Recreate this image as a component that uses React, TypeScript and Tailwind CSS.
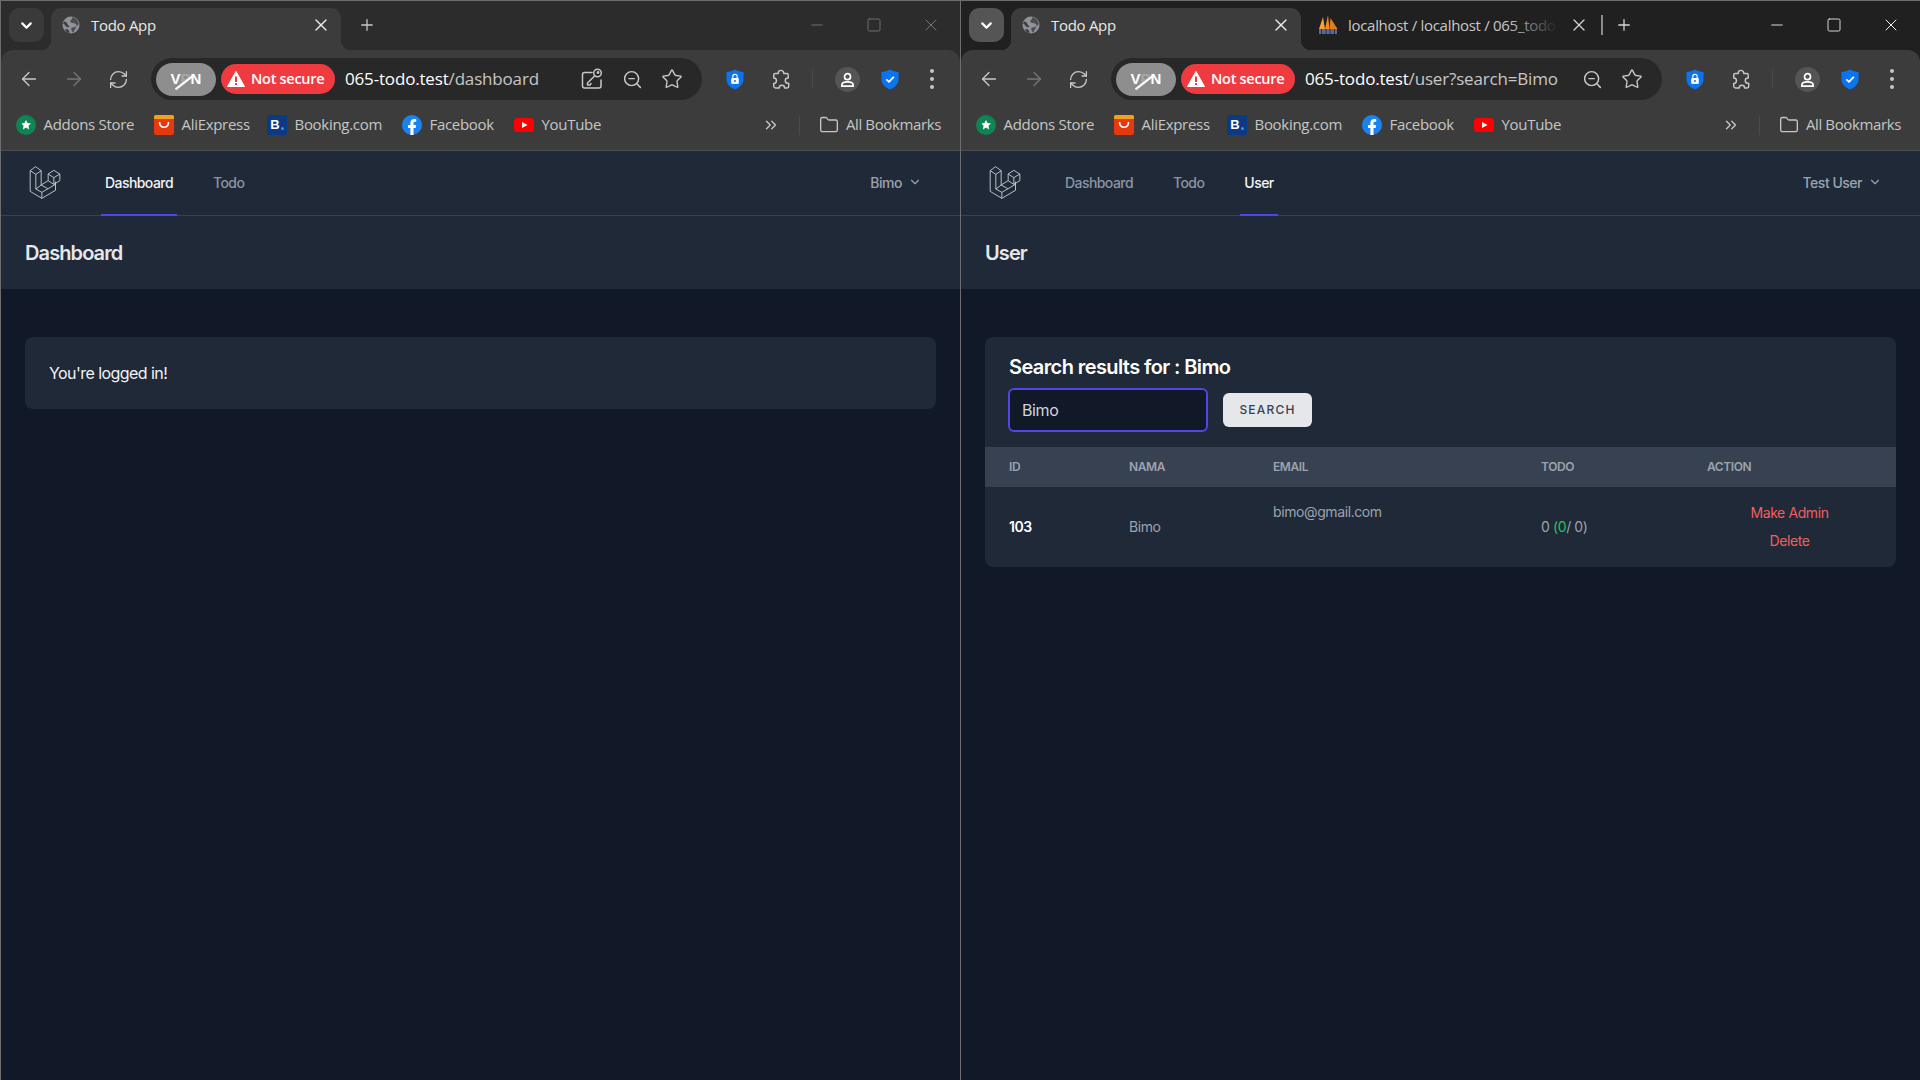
import type { ReactNode } from 'react'
import {
  ArrowLeft,
  ArrowRight,
  ChevronDown,
  ChevronsRight,
  Folder,
  Minus,
  Plus,
  RefreshCw,
  Square,
  Star,
  X,
  ZoomOut,
} from 'lucide-react'

const chromeFont = "font-['Open_Sans','Noto_Sans',sans-serif]"
const pageFont = "font-['Inter','Noto_Sans',sans-serif] tracking-[-0.025em]"

function LaravelLogo() {
  return (
    <svg viewBox="26 19 95 99" className="h-[33px] w-[32px] text-[#d1d5db]" fill="none" stroke="currentColor" strokeWidth="2.6" strokeLinejoin="round">
      <path d="M29 33 L45 21 L62 33 L46 44 Z" />
      <path d="M29 33 V95 L64 116 L105 92 V66" />
      <path d="M46 44 V88 L64 98 V116" />
      <path d="M62 33 V76 L82 87" />
      <path d="M64 98 L105 74" />
      <path d="M46 88 L62 76" />
      <path d="M83 43 L100 32 L118 43 L100 54 Z" />
      <path d="M83 43 V63 L100 74 L118 63 V43" />
      <path d="M100 54 V74" />
      <path d="M83 63 L62 76" />
    </svg>
  )
}

function GlobeIcon() {
  return (
    <svg viewBox="0 0 18 18" className="h-[18px] w-[18px]">
      <circle cx="9" cy="9" r="8.5" fill="#8d939b" />
      <path d="M3 13.5c1.5-.6 3-.2 4 1l.5 2.5C5.5 17 3.8 15.5 3 13.5zM2 5.5c1.5.2 3 1.2 3.5 2.8.3 1.2 1.3 1.5 2 2.2-.8 1.2-2.7.8-3.6-.3C3 9 2 7.8 1 7.5z" fill="#3c3c3c" />
      <path d="M10 1c1 1-.5 2.5-1.5 3.5S9.5 7 11 7s3.5 1 3.5 2.5-1.2 3-2 4.500-1 2-2 2.500c-1-1-.8-3-1.500-4.500C13 11 16 10 16.800 8 16 4 13.500 1.500 10 1z" fill="#3c3c3c" opacity="0.8" />
    </svg>
  )
}

function PmaIcon() {
  return (
    <svg viewBox="0 0 20 20" className="h-[20px] w-[20px]">
      <path d="M1 14 L5 2 L7 14 Z" fill="#f7a13a" />
      <path d="M7 14 L10 0 L11.500 14 Z" fill="#f48a1c" />
      <path d="M11.500 14 L12.500 3 L19.500 14 Z" fill="#e0801a" />
      <rect x="1" y="14" width="18" height="5" fill="#5b6a9c" />
      <path d="M3.500 14v5M8 14v5M12 14v5M16.500 14v5" stroke="#20243a" strokeWidth="0.8" />
    </svg>
  )
}

function ShieldIcon({ check }: { check?: boolean }) {
  return (
    <svg viewBox="0 0 18 21" className="h-[21px] w-[18px]">
      <path d="M9 0.500 C11.500 2 14.500 3 17.500 3 V10.500 C17.500 15 13.500 18.500 9 20.500 C4.500 18.500 0.500 15 0.500 10.500 V3 C3.500 3 6.500 2 9 0.500 Z" fill="#0b74f1" />
      {check ? (
        <path d="M5.300 10.300 L8 12.800 L12.800 7.800" fill="none" stroke="#fff" strokeWidth="1.800" />
      ) : (
        <>
          <path d="M6.800 9 V7.500 a2.200 2.200 0 0 1 4.400 0 V9" fill="none" stroke="#fff" strokeWidth="1.200" />
          <rect x="5.200" y="9" width="7.600" height="6" rx="1" fill="#fff" />
          <circle cx="9" cy="12" r="1" fill="#0b74f1" />
        </>
      )}
    </svg>
  )
}

function PuzzleIcon() {
  return (
    <svg viewBox="0 0 22 22" className="h-[22px] w-[22px]" fill="none" stroke="#c7c7c7" strokeWidth="1.600" strokeLinejoin="round">
      <path d="M8 4.500 a3 3 0 0 1 6 0 L14 5 h3.500 a1.500 1.500 0 0 1 1.500 1.500 V10 h-.500 a2.800 2.800 0 0 0 0 5.600 H19.500 V19 a1.800 1.800 0 0 1-1.800 1.800 H15 a3 3 0 0 0-6 0 H5 A2 2 0 0 1 3 19 V16 a3 3 0 0 0 0-6 V6.800 A1.800 1.800 0 0 1 4.800 5 H8 Z" />
    </svg>
  )
}

function KeyShareIcon() {
  return (
    <svg viewBox="0 0 22 22" className="h-[22px] w-[22px]" fill="none" stroke="#c7c7c7" strokeWidth="1.500" strokeLinecap="round" strokeLinejoin="round">
      <path d="M11 4.500 H3.500 a2 2 0 0 0-2 2 V18 a2 2 0 0 0 2 2 H18 a2 2 0 0 0 2-2 V12" />
      <circle cx="16.500" cy="5" r="3.800" />
      <path d="M13.800 7.700 L6.500 15 V17 H9 L10 15.500" />
      <circle cx="17" cy="4.500" r="0.700" fill="#c7c7c7" />
    </svg>
  )
}

function WarningIcon() {
  return (
    <svg viewBox="0 0 18 18" className="h-[18px] w-[18px]">
      <path d="M9 1.500 L17.500 16.500 H0.500 Z" fill="#fff" stroke="#fff" strokeLinejoin="round" />
      <rect x="8" y="6.500" width="2" height="5.500" fill="#ef3b3f" />
      <rect x="8" y="13" width="2" height="2" fill="#ef3b3f" />
    </svg>
  )
}

function Bookmark({ w, icon, label }: { w: string; icon: ReactNode; label: string }) {
  return (
    <div className={`flex items-center gap-[7.500px] ${w}`}>
      <span className="flex h-[20px] w-[20px] shrink-0 items-center justify-center">{icon}</span>
      <span className="whitespace-nowrap text-[15px] tracking-[-0.02em] text-[#c4c7c5]">{label}</span>
    </div>
  )
}

function BookmarksBar() {
  return (
    <div className="flex h-[42px] items-center pl-[15px] pb-[9px]">
      <Bookmark
        w="w-[138px]"
        label="Addons Store"
        icon={
          <svg viewBox="0 0 20 20" className="h-[20px] w-[20px]">
            <circle cx="10" cy="10" r="10" fill="#0f8553" />
            <path d="M10 5 L11.500 8 L15 8.400 L12.500 10.800 L13 14.500 L10 12.600 L7 14.500 L7.500 10.800 L5.500 8.400 L8.500 8 Z" fill="#fff" />
          </svg>
        }
      />
      <Bookmark
        w="w-[113px]"
        label="AliExpress"
        icon={
          <svg viewBox="0 0 20 20" className="h-[20px] w-[20px]">
            <rect width="20" height="20" rx="2" fill="#e8380d" />
            <path d="M0 2 a2 2 0 0 1 2-2 h16 a2 2 0 0 1 2 2 v2 H0 Z" fill="#f7a11b" />
            <path d="M5.500 7 c.3 7 8.700 7 9 0" fill="none" stroke="#fff" strokeWidth="1.600" />
          </svg>
        }
      />
      <Bookmark
        w="w-[135px]"
        label="Booking.com"
        icon={
          <span className="relative flex h-[20px] w-[20px] items-center justify-center rounded-[2px] bg-[#0b3a82] font-['Liberation_Sans',sans-serif] text-[13px] font-bold text-white">
            <span className="-ml-[4px]">B</span>
            <span className="absolute bottom-[5px] right-[3px] h-[3px] w-[3px] rounded-full bg-[#2f9be8]" />
          </span>
        }
      />
      <Bookmark
        w="w-[112px]"
        label="Facebook"
        icon={
          <svg viewBox="0 0 20 20" className="h-[20px] w-[20px]">
            <circle cx="10" cy="10" r="10" fill="#1a83f0" />
            <path d="M8.400 20 V13 H6 V10 H8.400 V7.800 C8.400 5.300 9.900 4 12.100 4 L14.200 4.200 V6.800 H13 C11.800 6.800 11.500 7.400 11.500 8.200 V10 H14.100 L13.700 13 H11.500 V20 Z" fill="#fff" />
          </svg>
        }
      />
      <Bookmark
        w="w-[100px]"
        label="YouTube"
        icon={
          <svg viewBox="0 0 20 14" className="h-[14px] w-[20px]">
            <rect width="20" height="14" rx="3.500" fill="#f00" />
            <path d="M8 4 L13.500 7 L8 10 Z" fill="#fff" />
          </svg>
        }
      />
      <div className="ml-auto flex items-center pr-[19px]">
        <ChevronsRight className="h-[18px] w-[18px] text-[#c7c7c7]" strokeWidth={1.800} />
        <span className="ml-[19px] h-[20px] w-px bg-[#4a4a4a]" />
        <Folder className="ml-[19px] h-[20px] w-[20px] text-[#c7c7c7]" strokeWidth={1.600} />
        <span className="ml-[7px] whitespace-nowrap text-[15px] tracking-[-0.025em] text-[#c4c7c5]">All Bookmarks</span>
      </div>
    </div>
  )
}

function BrowserWindow({
  focused,
  url,
  urlPath,
  showKey,
  user,
  links,
  activeLink,
  extraTab,
  children,
}: {
  focused?: boolean
  url: string
  urlPath: string
  showKey?: boolean
  user: string
  links: string[]
  activeLink: string
  extraTab?: boolean
  children: ReactNode
}) {
  const stripBg = focused ? 'bg-[#202020]' : 'bg-[#2c2c2c]'
  const ctrlColor = focused ? 'text-[#f1f1f1]' : 'text-[#777777]'

  return (
    <div className="flex h-[1080px] w-[960px] flex-col border-l border-t border-[#6e6e6e] bg-[#111827]">
      {/* Tab strip */}
      <div className={`flex h-[49px] items-start ${chromeFont} ${stripBg}`}>
        <div className={`ml-[8px] mt-[7px] flex h-[34px] w-[35px] items-center justify-center rounded-[10px] ${focused ? 'bg-[#555555]' : 'bg-[#3a3a3a]'}`}>
          <ChevronDown className="h-[17px] w-[17px] text-white" strokeWidth={3} />
        </div>
        <div className="relative z-10 ml-[7px] mt-[7px] flex h-[42px] w-[290px] items-center rounded-t-[10px] bg-[#3c3c3c] pl-[11px] pb-[8px]">
          <span className="absolute bottom-0 left-[-10px] h-[10px] w-[10px] bg-[radial-gradient(circle_at_0_0,transparent_10px,#3c3c3c_10.500px)]" />
          <span className="absolute bottom-0 right-[-10px] h-[10px] w-[10px] bg-[radial-gradient(circle_at_100%_0,transparent_10px,#3c3c3c_10.500px)]" />
          <GlobeIcon />
          <span className="ml-[11px] text-[15px] tracking-[-0.02em] text-[#e8e8e8]">Todo App</span>
          <X className="absolute right-[10px] top-[7px] h-[20px] w-[20px] text-[#e8e8e8]" strokeWidth={1.700} />
        </div>
        {extraTab && (
          <div className="relative ml-[17px] mt-[7px] flex h-[42px] w-[270px] items-center pb-[8px]">
            <PmaIcon />
            <span className="ml-[10px] w-[209px] overflow-hidden whitespace-nowrap text-[15px] tracking-[-0.02em] text-[#c7c7c7]">localhost / localhost / 065_todo</span>
            <span className="absolute left-[190px] top-0 h-[42px] w-[50px] bg-[linear-gradient(to_right,transparent,#202020)]" />
            <X className="absolute right-[-1px] top-[7px] h-[20px] w-[20px] text-[#d5d5d5]" strokeWidth={1.500} />
          </div>
        )}
        {extraTab && <span className="ml-[13px] mt-[14px] h-[20px] w-[2px] bg-[#8a8a8a]" />}
        <Plus className={`mt-[15px] h-[18px] w-[18px] ${extraTab ? 'ml-[12px] text-[#d5d5d5]' : 'ml-[17px] text-[#c7c7c7]'}`} strokeWidth={1.700} />
        <div className={`ml-auto flex h-[49px] pb-[2px] ${ctrlColor}`}>
          <span className="flex w-[57px] items-center justify-center">
            <Minus className="h-[18px] w-[18px]" strokeWidth={1.200} />
          </span>
          <span className="flex w-[57px] items-center justify-center">
            <Square className="h-[16px] w-[16px]" strokeWidth={1.300} />
          </span>
          <span className="flex w-[58px] items-center justify-center">
            <X className="h-[20px] w-[20px]" strokeWidth={1.200} />
          </span>
        </div>
      </div>

      {/* Toolbar + bookmarks */}
      <div className={stripBg}>
        <div className={`rounded-t-[12px] border-b border-[#4d4d4d] bg-[#3c3c3c] ${chromeFont}`}>
          <div className="flex h-[58px] items-center pl-[5px]">
            <span className="flex w-[45px] justify-center">
              <ArrowLeft className="h-[22px] w-[22px] text-[#c7c7c7]" strokeWidth={1.500} />
            </span>
            <span className="flex w-[45px] justify-center">
              <ArrowRight className="h-[22px] w-[22px] text-[#767676]" strokeWidth={1.500} />
            </span>
            <span className="flex w-[45px] justify-center">
              <RefreshCw className="h-[21px] w-[21px] text-[#c7c7c7]" strokeWidth={1.500} />
            </span>
            <div className="ml-[10px] flex h-[42px] w-[551px] items-center rounded-full bg-[#282828] pl-[5px] pr-[10px]">
              <div className="relative flex h-[33px] w-[60px] items-center justify-center rounded-full bg-[#8e8e8e] font-['Liberation_Sans',sans-serif] text-[15px] font-bold text-white">
                V<span className="text-[#a6a6a6]">P</span>N
                <span className="absolute left-[17px] top-[18px] h-[2px] w-[24px] -rotate-[38deg] bg-white" />
              </div>
              <div className="ml-[5px] flex h-[30px] w-[114px] items-center rounded-full bg-[#ef3b3f] pl-[6px] text-white">
                <WarningIcon />
                <span className="ml-[6px] whitespace-nowrap text-[14.500px] font-semibold tracking-[-0.02em]">Not secure</span>
              </div>
              <span className="ml-[10px] whitespace-nowrap text-[17px] tracking-[-0.01em] text-white">
                {url}
                <span className="text-[#c7c7c7]">{urlPath}</span>
              </span>
              <div className="ml-auto flex items-center">
                {showKey && (
                  <span className="flex w-[40px] justify-center">
                    <KeyShareIcon />
                  </span>
                )}
                <span className="flex w-[40px] justify-center">
                  <ZoomOut className="h-[21px] w-[21px] text-[#c7c7c7]" strokeWidth={1.700} />
                </span>
                <span className="flex w-[40px] justify-center">
                  <Star className="h-[22px] w-[22px] text-[#c7c7c7]" strokeWidth={1.500} />
                </span>
              </div>
            </div>
            <span className="ml-[23px] flex w-[20px] justify-center">
              <ShieldIcon />
            </span>
            <span className="ml-[26px] flex w-[20px] justify-center">
              <PuzzleIcon />
            </span>
            <span className="ml-[21px] h-[20px] w-px bg-[#4a4a4a]" />
            <span className="ml-[22px] flex h-[25px] w-[25px] items-center justify-center rounded-full bg-[#555555]">
              <svg viewBox="0 0 16 16" className="h-[15px] w-[15px]" fill="none" stroke="#fff" strokeWidth="1.800">
                <circle cx="8" cy="5" r="3.200" />
                <path d="M2 15 v-1 c0-2 2-3.500 6-3.500 s6 1.500 6 3.500 v1 Z" />
              </svg>
            </span>
            <span className="ml-[21px] flex w-[18px] justify-center">
              <ShieldIcon check />
            </span>
            <span className="ml-[31px] flex flex-col gap-[4px]">
              <span className="h-[4px] w-[4px] rounded-full bg-[#c7c7c7]" />
              <span className="h-[4px] w-[4px] rounded-full bg-[#c7c7c7]" />
              <span className="h-[4px] w-[4px] rounded-full bg-[#c7c7c7]" />
            </span>
          </div>
          <BookmarksBar />
        </div>
      </div>

      {/* App page */}
      <div className={`flex flex-1 flex-col ${pageFont}`}>
        <nav className="flex h-[65px] items-stretch border-b border-[#374151] bg-[#1f2937] pl-[28px] pr-[38px]">
          <div className="flex items-center pb-[2px]">
            <LaravelLogo />
          </div>
          <div className="ml-[40px] flex gap-[32px]">
            {links.map((link) => (
              <a
                key={link}
                className={
                  link === activeLink
                    ? 'flex h-[65px] items-center border-b-2 border-[#4f46e5] px-[4px] text-[14px] font-medium tracking-[-0.04em] text-[#f3f4f6]'
                    : 'flex h-[65px] items-center border-b-2 border-transparent px-[4px] text-[14px] font-medium tracking-[-0.04em] text-[#8b95a5]'
                }
              >
                {link}
              </a>
            ))}
          </div>
          <div className="ml-auto flex items-center gap-[6px] pb-[2px] text-[14px] font-medium tracking-[-0.035em] text-[#9ca3af]">
            {user}
            <ChevronDown className="h-[14px] w-[14px]" strokeWidth={2} />
          </div>
        </nav>
        <header className="flex h-[73px] items-center bg-[#1f2937] px-[24px]">
          <h2 className="text-[20px] font-semibold tracking-[-0.045em] text-[#e5e7eb]">{activeLink}</h2>
        </header>
        <main className="px-[24px] py-[48px]">{children}</main>
      </div>
    </div>
  )
}

export default function App() {
  return (
    <div className="flex h-[1080px] w-[1920px] overflow-hidden">
      <BrowserWindow
        url="065-todo.test"
        urlPath="/dashboard"
        showKey
        user="Bimo"
        links={['Dashboard', 'Todo']}
        activeLink="Dashboard"
      >
        <div className="rounded-lg bg-[#1f2937] p-[24px] text-[16px] leading-[24px] tracking-[-0.035em] text-[#f3f4f6]">You're logged in!</div>
      </BrowserWindow>

      <BrowserWindow
        focused
        extraTab
        url="065-todo.test"
        urlPath="/user?search=Bimo"
        user="Test User"
        links={['Dashboard', 'Todo', 'User']}
        activeLink="User"
      >
        <div className="overflow-hidden rounded-lg bg-[#1f2937] text-[#f3f4f6]">
          <div className="px-[24px] pt-[16px]">
            <h3 className="text-[20px] font-semibold leading-[28px] tracking-[-0.03em] text-white">Search results for : Bimo</h3>
            <div className="mb-[15px] mt-[7px] flex items-center gap-[15px]">
              <input
                readOnly
                value="Bimo"
                className="-ml-px h-[44px] w-[200px] rounded-md border-2 border-[#4f46e5] bg-[#111827] px-[12px] text-[16px] text-[#d1d5db] outline-none"
              />
              <button className="h-[34px] w-[89px] rounded-md bg-[#e5e7eb] text-[12px] font-medium uppercase tracking-[0.1em] text-[#374151]">
                Search
              </button>
            </div>
          </div>
          <table className="w-full table-fixed text-left text-[14px] leading-[20px]">
            <colgroup>
              <col className="w-[120px]" />
              <col className="w-[144px]" />
              <col className="w-[268px]" />
              <col className="w-[166px]" />
              <col />
            </colgroup>
            <thead>
              <tr className="h-[40px] bg-[#374151] text-[12px] font-semibold uppercase text-[#9ca3af]">
                <th className="px-[24px] font-semibold">ID</th>
                <th className="px-[24px] font-semibold">Nama</th>
                <th className="px-[24px] font-semibold">Email</th>
                <th className="px-[24px] font-semibold">Todo</th>
                <th className="px-[24px] font-semibold">Action</th>
              </tr>
            </thead>
            <tbody>
              <tr className="h-[80px]">
                <td className="px-[24px] font-semibold text-white">103</td>
                <td className="px-[24px] text-[#9ca3af]">Bimo</td>
                <td className="px-[24px] pt-[15px] align-top text-[#9ca3af]">bimo@gmail.com</td>
                <td className="px-[24px] text-[#9ca3af]">
                  0 <span className="text-[#22c55e]">(0</span>/ 0)
                </td>
                <td className="px-[24px] py-[12px] text-center text-[#f25f5f]">
                  <a className="block py-[4px]">Make Admin</a>
                  <a className="block py-[4px]">Delete</a>
                </td>
              </tr>
            </tbody>
          </table>
        </div>
      </BrowserWindow>
    </div>
  )
}
